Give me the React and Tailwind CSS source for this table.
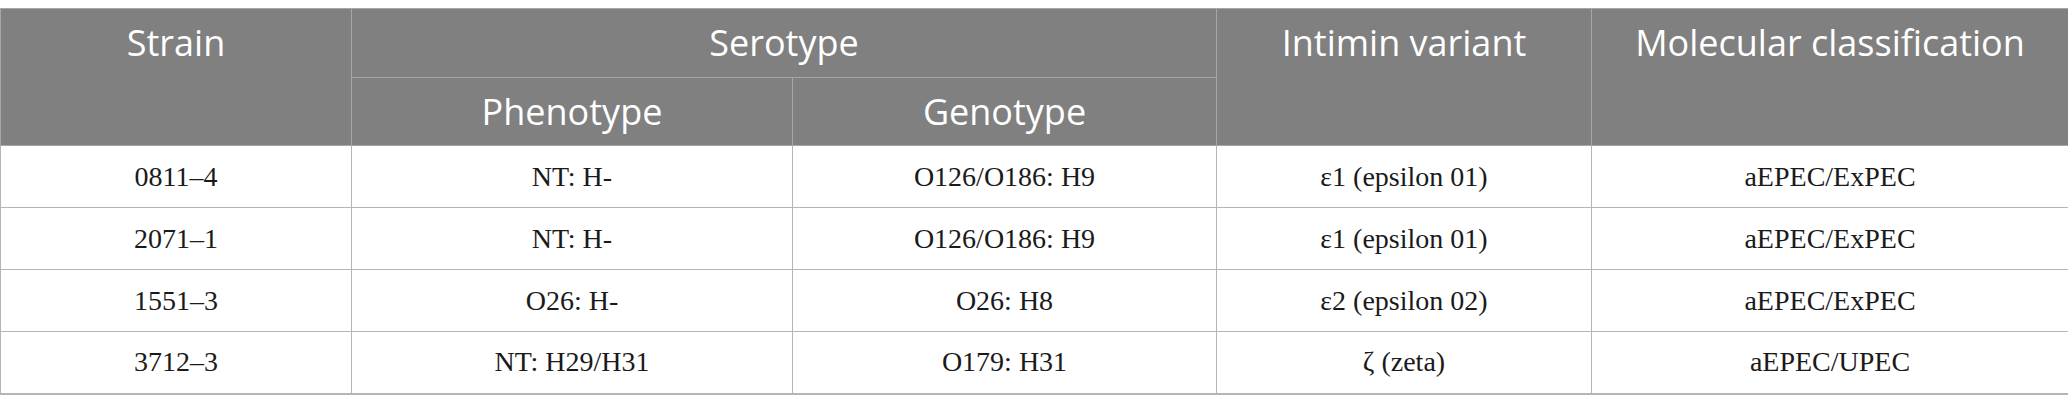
import React from "react";

const rows = [
  ["0811–4", "NT: H-", "O126/O186: H9", "ε1 (epsilon 01)", "aEPEC/ExPEC"],
  ["2071–1", "NT: H-", "O126/O186: H9", "ε1 (epsilon 01)", "aEPEC/ExPEC"],
  ["1551–3", "O26: H-", "O26: H8", "ε2 (epsilon 02)", "aEPEC/ExPEC"],
  ["3712–3", "NT: H29/H31", "O179: H31", "ζ (zeta)", "aEPEC/UPEC"],
];

const th =
  "border border-[#a6a6a6] bg-[#7f807f] text-white font-normal align-top text-center px-3 pt-[14px]";

export default function App() {
  return (
    <div className="bg-white w-[2068px] h-[412px] pt-2">
      <table className="w-[2068px] table-fixed border-collapse border border-[#b5b5b5] border-b-2">
        <colgroup>
          <col className="w-[351px]" />
          <col className="w-[441px]" />
          <col className="w-[424px]" />
          <col className="w-[375px]" />
          <col className="w-[477px]" />
        </colgroup>
        <thead className="font-['Open_Sans',sans-serif] text-[36px] leading-[40px]">
          <tr className="h-[69px]">
            <th rowSpan={2} className={th}>Strain</th>
            <th colSpan={2} className={th}>Serotype</th>
            <th rowSpan={2} className={th}>Intimin variant</th>
            <th rowSpan={2} className={th}>Molecular classification</th>
          </tr>
          <tr className="h-[68px]">
            <th className={th}>Phenotype</th>
            <th className={th}>Genotype</th>
          </tr>
        </thead>
        <tbody className="font-['Liberation_Serif',serif] text-[28px] text-[#1a1a1a]">
          {rows.map((r, i) => (
            <tr key={i} className="h-[62px]">
              {r.map((c, j) => (
                <td key={j} className="border border-[#b5b5b5] text-center align-middle px-3">
                  {c}
                </td>
              ))}
            </tr>
          ))}
        </tbody>
      </table>
    </div>
  );
}
